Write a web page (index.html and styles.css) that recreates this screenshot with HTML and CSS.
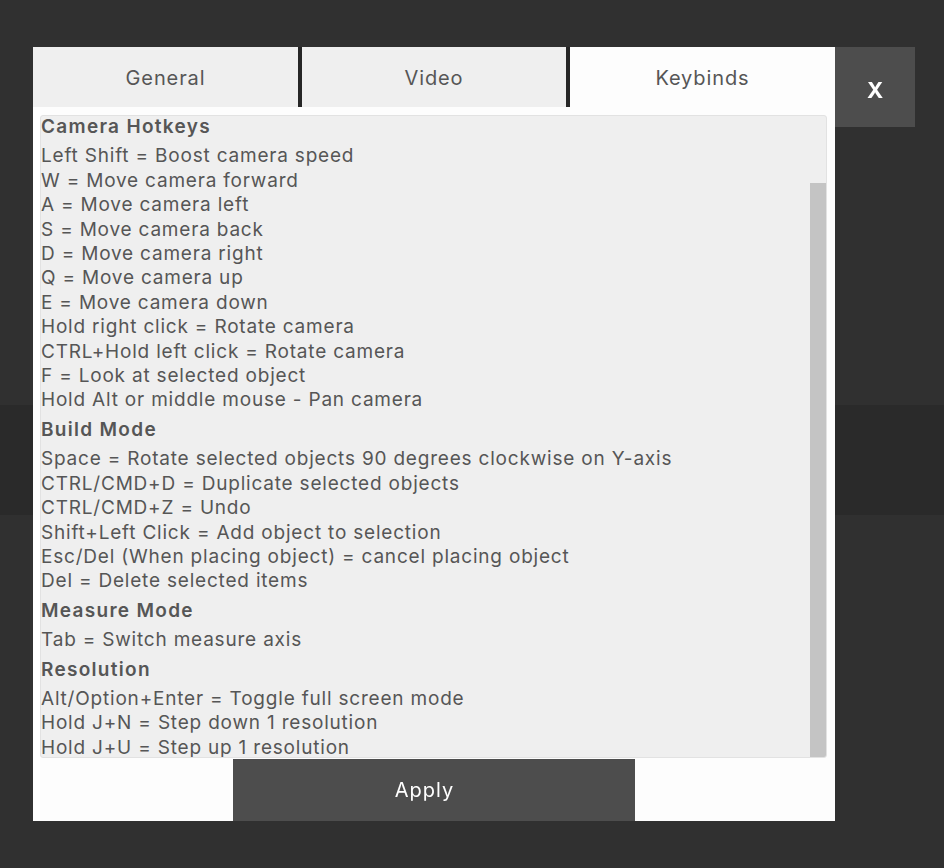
FILE: index.html
```html
<!DOCTYPE html>
<html lang="en">
<head>
  <meta charset="UTF-8">
  <title>Settings - Keybinds</title>
  <link rel="stylesheet" href="styles.css">
</head>
<body>
  <div class="backdrop"></div>

  <div class="settings">
    <div class="modal">
      <nav class="tabs">
        <div class="tab">General</div>
        <div class="tab">Video</div>
        <div class="tab active">Keybinds</div>
      </nav>

      <div class="modal-body">
        <div class="keybinds">
          <div class="keylist">
            <h3>Camera Hotkeys</h3>
            <p>Left Shift = Boost camera speed</p>
            <p>W = Move camera forward</p>
            <p>A = Move camera left</p>
            <p>S = Move camera back</p>
            <p>D = Move camera right</p>
            <p>Q = Move camera up</p>
            <p>E = Move camera down</p>
            <p>Hold right click = Rotate camera</p>
            <p>CTRL+Hold left click = Rotate camera</p>
            <p>F = Look at selected object</p>
            <p>Hold Alt or middle mouse - Pan camera</p>

            <h3>Build Mode</h3>
            <p>Space = Rotate selected objects 90 degrees clockwise on Y-axis</p>
            <p>CTRL/CMD+D = Duplicate selected objects</p>
            <p>CTRL/CMD+Z = Undo</p>
            <p>Shift+Left Click = Add object to selection</p>
            <p>Esc/Del (When placing object) = cancel placing object</p>
            <p>Del = Delete selected items</p>

            <h3>Measure Mode</h3>
            <p>Tab = Switch measure axis</p>

            <h3>Resolution</h3>
            <p>Alt/Option+Enter = Toggle full screen mode</p>
            <p>Hold J+N = Step down 1 resolution</p>
            <p>Hold J+U = Step up 1 resolution</p>
          </div>
          <div class="scrollbar">
            <div class="thumb"></div>
          </div>
        </div>

        <button class="apply">Apply</button>
      </div>
    </div>

    <button class="close">X</button>
  </div>
</body>
</html>
```

FILE: styles.css
```css
body {
  margin: 0;
  background: #303030;
  font-family: Inter, "Noto Sans", sans-serif;
  color: #565656;
}
.backdrop {
  position: fixed;
  left: 0;
  right: 0;
  top: 405px;
  height: 110px;
  background: #2a2a2a;
  z-index: -1;
}
.settings {
  display: flex;
  align-items: flex-start;
  padding: 47px 0 0 33px;
}
.modal {
  width: 802px;
  background: #fdfdfd;
}
.tabs {
  display: grid;
  grid-template-columns: 265px 264px 265px;
  column-gap: 4px;
  background: #262626;
}
.tab {
  height: 60px;
  line-height: 63px;
  text-align: center;
  font-size: 20px;
  letter-spacing: 0.9px;
  background: #efefef;
  color: #565656;
}
.tab.active {
  background: #fdfdfd;
}
.modal-body {
  padding: 8px 8px 0 7px;
}
.keybinds {
  display: flex;
  height: 641px;
  background: #efefef;
  border: 1px solid #e2e2e2;
  border-radius: 3px;
  overflow: hidden;
}
.keylist {
  flex: 1;
  font-size: 19px;
  line-height: 24.4px;
  letter-spacing: 0.8px;
}
.keylist h3 {
  font-size: 19px;
  font-weight: 600;
  letter-spacing: 1.3px;
  margin: 5px 0;
  color: #565656;
}
.keylist h3:first-child {
  margin-top: -1px;
}
.keylist p {
  margin: 0;
  white-space: nowrap;
}
.scrollbar {
  width: 16px;
  padding-top: 67px;
}
.thumb {
  height: 100%;
  background: #c4c4c4;
}
.apply {
  display: block;
  width: 402px;
  height: 62px;
  margin: 1px auto 0;
  padding: 0 18px 0 0;
  border: none;
  background: #4d4d4d;
  color: #fff;
  font-family: Inter, "Noto Sans", sans-serif;
  font-size: 20px;
  letter-spacing: 1px;
}
.close {
  width: 80px;
  height: 80px;
  border: none;
  background: #4d4d4d;
  color: #fff;
  font-family: Inter, "Noto Sans", sans-serif;
  font-size: 22px;
  font-weight: 700;
  padding-top: 6px;
}
```
